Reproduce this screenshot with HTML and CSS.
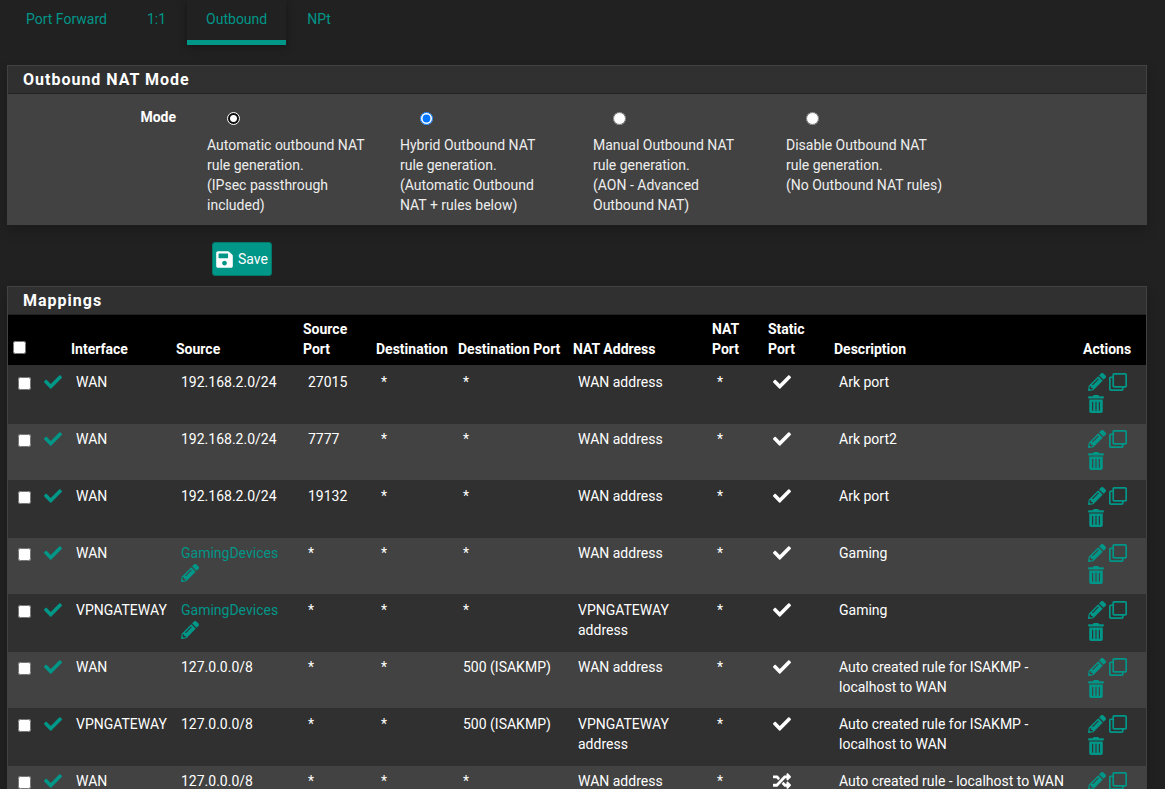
FILE: index.html
```html
<!DOCTYPE html>
<html lang="en">
<head>
<meta charset="utf-8">
<meta name="viewport" content="width=device-width, initial-scale=1">
<title>Firewall: NAT: Outbound</title>
<link rel="stylesheet" href="styles.css">
</head>
<body>
<svg class="sprite" aria-hidden="true">
  <symbol id="check" viewBox="0 0 512 512"><path d="M173.898 439.404l-166.4-166.4c-9.997-9.997-9.997-26.206 0-36.204l36.203-36.204c9.997-9.998 26.207-9.998 36.204 0L192 312.69 432.095 72.596c9.997-9.997 26.207-9.997 36.204 0l36.203 36.204c9.997 9.997 9.997 26.206 0 36.204l-294.4 294.401c-9.998 9.997-26.207 9.997-36.204-.001z"/></symbol>
  <symbol id="pencil" viewBox="0 0 512 512"><path d="M497.9 142.1l-46.1 46.1c-4.7 4.7-12.3 4.7-17 0l-111-111c-4.7-4.7-4.7-12.3 0-17l46.1-46.1c18.7-18.7 49.1-18.7 67.9 0l60.1 60.1c18.8 18.7 18.8 49.1 0 67.9zM284.2 99.8L21.6 362.4.4 483.9c-2.9 16.4 11.4 30.6 27.8 27.8l121.5-21.3 262.6-262.6c4.7-4.7 4.7-12.3 0-17l-111-111c-4.8-4.7-12.4-4.7-17.1 0zM124.1 339.9c-5.5-5.5-5.5-14.3 0-19.8l154-154c5.5-5.5 14.3-5.5 19.8 0s5.5 14.3 0 19.8l-154 154c-5.5 5.5-14.3 5.5-19.8 0zM88 424h48v36.3l-64.5 11.3-31.1-31.1L51.7 376H88v48z"/></symbol>
  <symbol id="clone" viewBox="0 0 512 512"><path d="M464 0H144c-26.51 0-48 21.49-48 48v48H48c-26.51 0-48 21.49-48 48v320c0 26.51 21.49 48 48 48h320c26.51 0 48-21.49 48-48v-48h48c26.51 0 48-21.49 48-48V48c0-26.51-21.49-48-48-48zM362 464H54a6 6 0 0 1-6-6V150a6 6 0 0 1 6-6h42v224c0 26.51 21.49 48 48 48h224v42a6 6 0 0 1-6 6zm96-96H150a6 6 0 0 1-6-6V54a6 6 0 0 1 6-6h308a6 6 0 0 1 6 6v308a6 6 0 0 1-6 6z"/></symbol>
  <symbol id="trash" viewBox="0 0 448 512"><path d="M32 464a48 48 0 0 0 48 48h288a48 48 0 0 0 48-48V128H32zm272-256a16 16 0 0 1 32 0v224a16 16 0 0 1-32 0zm-96 0a16 16 0 0 1 32 0v224a16 16 0 0 1-32 0zm-96 0a16 16 0 0 1 32 0v224a16 16 0 0 1-32 0zM432 32H312l-9.4-18.7A24 24 0 0 0 281.1 0H166.8a23.72 23.72 0 0 0-21.4 13.3L136 32H16A16 16 0 0 0 0 48v32a16 16 0 0 0 16 16h416a16 16 0 0 0 16-16V48a16 16 0 0 0-16-16z"/></symbol>
  <symbol id="save" viewBox="0 0 448 512"><path d="M433.941 129.941l-83.882-83.882A48 48 0 0 0 316.118 32H48C21.49 32 0 53.49 0 80v352c0 26.51 21.49 48 48 48h352c26.51 0 48-21.49 48-48V163.882a48 48 0 0 0-14.059-33.941zM224 416c-35.346 0-64-28.654-64-64 0-35.346 28.654-64 64-64s64 28.654 64 64c0 35.346-28.654 64-64 64zm96-304.52V212c0 6.627-5.373 12-12 12H76c-6.627 0-12-5.373-12-12V108c0-6.627 5.373-12 12-12h228.52c3.183 0 6.235 1.264 8.485 3.515l3.48 3.48A11.996 11.996 0 0 1 320 111.48z"/></symbol>
  <symbol id="shuffle" viewBox="0 0 512 512"><path d="M504.971 359.029c9.373 9.373 9.373 24.569 0 33.941l-80 79.984c-15.01 15.01-40.971 4.49-40.971-16.971V416h-58.785a12.004 12.004 0 0 1-8.773-3.812l-70.556-75.596 53.333-57.143L352 336h32v-39.981c0-21.438 25.943-31.998 40.971-16.971l80 79.981zM12 176h84l52.781 56.551 53.333-57.143-70.556-75.596A11.999 11.999 0 0 0 122.785 96H12c-6.627 0-12 5.373-12 12v56c0 6.627 5.373 12 12 12zm372 0v39.984c0 21.46 25.961 31.98 40.971 16.971l80-79.984c9.373-9.373 9.373-24.569 0-33.941l-80-79.981C409.943 24.021 384 34.582 384 56.019V96h-58.785a12.004 12.004 0 0 0-8.773 3.812L96 336H12c-6.627 0-12 5.373-12 12v56c0 6.627 5.373 12 12 12h110.785c3.326 0 6.503-1.381 8.773-3.812L352 176h32z"/></symbol>
</svg>

<nav class="tabs" aria-label="NAT">
  <a class="tab" href="#forward">Port Forward</a>
  <a class="tab" href="#one">1:1</a>
  <a class="tab active" href="#outbound" aria-current="page">Outbound</a>
  <a class="tab" href="#npt">NPt</a>
</nav>

<main>
  <form>
    <section class="panel">
      <h2 class="panel-title">Outbound NAT Mode</h2>
      <div class="modes" role="radiogroup" aria-labelledby="mode-label">
        <span class="mode-label" id="mode-label">Mode</span>
        <label class="mode"><input class="radio current" type="radio" name="mode"><span>Automatic outbound NAT rule generation.<br>(IPsec passthrough included)</span></label>
        <label class="mode"><input class="radio" type="radio" name="mode" checked><span>Hybrid Outbound NAT rule generation.<br>(Automatic Outbound NAT + rules below)</span></label>
        <label class="mode"><input class="radio" type="radio" name="mode"><span>Manual Outbound NAT rule generation.<br>(AON - Advanced Outbound NAT)</span></label>
        <label class="mode"><input class="radio" type="radio" name="mode"><span>Disable Outbound NAT rule generation.<br>(No Outbound NAT rules)</span></label>
      </div>
    </section>
    <div class="form-actions">
      <button class="save" type="button"><svg class="icon narrow"><use href="#save"/></svg>Save</button>
    </div>
  </form>

  <section class="panel">
    <h2 class="panel-title">Mappings</h2>
    <table class="rules">
      <colgroup>
        <col class="c-tick"><col class="c-state"><col class="c-interface"><col class="c-source"><col class="c-source-port"><col class="c-dest"><col class="c-dest-port"><col class="c-nat"><col class="c-nat-port"><col class="c-static"><col><col class="c-actions">
      </colgroup>
      <thead>
        <tr>
          <th><input class="tick" type="checkbox" aria-label="Select all"></th>
          <th></th>
          <th>Interface</th>
          <th>Source</th>
          <th>Source Port</th>
          <th>Destination</th>
          <th>Destination Port</th>
          <th>NAT Address</th>
          <th>NAT Port</th>
          <th>Static Port</th>
          <th>Description</th>
          <th>Actions</th>
        </tr>
      </thead>
      <tbody>
        <tr>
          <td><input class="tick" type="checkbox" aria-label="Select rule 1"></td>
          <td><a href="#toggle" aria-label="Disable"><svg class="icon"><use href="#check"/></svg></a></td>
          <td>WAN</td><td>192.168.2.0/24</td><td>27015</td><td>*</td><td>*</td><td>WAN address</td><td>*</td>
          <td><svg class="icon"><use href="#check"/></svg></td>
          <td>Ark port</td>
          <td><div class="actions"><a href="#edit" aria-label="Edit"><svg class="icon"><use href="#pencil"/></svg></a><a href="#copy" aria-label="Copy"><svg class="icon"><use href="#clone"/></svg></a><a href="#delete" aria-label="Delete"><svg class="icon narrow"><use href="#trash"/></svg></a></div></td>
        </tr>
        <tr>
          <td><input class="tick" type="checkbox" aria-label="Select rule 2"></td>
          <td><a href="#toggle" aria-label="Disable"><svg class="icon"><use href="#check"/></svg></a></td>
          <td>WAN</td><td>192.168.2.0/24</td><td>7777</td><td>*</td><td>*</td><td>WAN address</td><td>*</td>
          <td><svg class="icon"><use href="#check"/></svg></td>
          <td>Ark port2</td>
          <td><div class="actions"><a href="#edit" aria-label="Edit"><svg class="icon"><use href="#pencil"/></svg></a><a href="#copy" aria-label="Copy"><svg class="icon"><use href="#clone"/></svg></a><a href="#delete" aria-label="Delete"><svg class="icon narrow"><use href="#trash"/></svg></a></div></td>
        </tr>
        <tr>
          <td><input class="tick" type="checkbox" aria-label="Select rule 3"></td>
          <td><a href="#toggle" aria-label="Disable"><svg class="icon"><use href="#check"/></svg></a></td>
          <td>WAN</td><td>192.168.2.0/24</td><td>19132</td><td>*</td><td>*</td><td>WAN address</td><td>*</td>
          <td><svg class="icon"><use href="#check"/></svg></td>
          <td>Ark port</td>
          <td><div class="actions"><a href="#edit" aria-label="Edit"><svg class="icon"><use href="#pencil"/></svg></a><a href="#copy" aria-label="Copy"><svg class="icon"><use href="#clone"/></svg></a><a href="#delete" aria-label="Delete"><svg class="icon narrow"><use href="#trash"/></svg></a></div></td>
        </tr>
        <tr>
          <td><input class="tick" type="checkbox" aria-label="Select rule 4"></td>
          <td><a href="#toggle" aria-label="Disable"><svg class="icon"><use href="#check"/></svg></a></td>
          <td>WAN</td><td><a href="#alias">GamingDevices</a> <a href="#edit-alias" aria-label="Edit alias"><svg class="icon"><use href="#pencil"/></svg></a></td><td>*</td><td>*</td><td>*</td><td>WAN address</td><td>*</td>
          <td><svg class="icon"><use href="#check"/></svg></td>
          <td>Gaming</td>
          <td><div class="actions"><a href="#edit" aria-label="Edit"><svg class="icon"><use href="#pencil"/></svg></a><a href="#copy" aria-label="Copy"><svg class="icon"><use href="#clone"/></svg></a><a href="#delete" aria-label="Delete"><svg class="icon narrow"><use href="#trash"/></svg></a></div></td>
        </tr>
        <tr>
          <td><input class="tick" type="checkbox" aria-label="Select rule 5"></td>
          <td><a href="#toggle" aria-label="Disable"><svg class="icon"><use href="#check"/></svg></a></td>
          <td>VPNGATEWAY</td><td><a href="#alias">GamingDevices</a> <a href="#edit-alias" aria-label="Edit alias"><svg class="icon"><use href="#pencil"/></svg></a></td><td>*</td><td>*</td><td>*</td><td>VPNGATEWAY address</td><td>*</td>
          <td><svg class="icon"><use href="#check"/></svg></td>
          <td>Gaming</td>
          <td><div class="actions"><a href="#edit" aria-label="Edit"><svg class="icon"><use href="#pencil"/></svg></a><a href="#copy" aria-label="Copy"><svg class="icon"><use href="#clone"/></svg></a><a href="#delete" aria-label="Delete"><svg class="icon narrow"><use href="#trash"/></svg></a></div></td>
        </tr>
        <tr>
          <td><input class="tick" type="checkbox" aria-label="Select rule 6"></td>
          <td><a href="#toggle" aria-label="Disable"><svg class="icon"><use href="#check"/></svg></a></td>
          <td>WAN</td><td>127.0.0.0/8</td><td>*</td><td>*</td><td>500 (ISAKMP)</td><td>WAN address</td><td>*</td>
          <td><svg class="icon"><use href="#check"/></svg></td>
          <td>Auto created rule for ISAKMP - localhost to WAN</td>
          <td><div class="actions"><a href="#edit" aria-label="Edit"><svg class="icon"><use href="#pencil"/></svg></a><a href="#copy" aria-label="Copy"><svg class="icon"><use href="#clone"/></svg></a><a href="#delete" aria-label="Delete"><svg class="icon narrow"><use href="#trash"/></svg></a></div></td>
        </tr>
        <tr>
          <td><input class="tick" type="checkbox" aria-label="Select rule 7"></td>
          <td><a href="#toggle" aria-label="Disable"><svg class="icon"><use href="#check"/></svg></a></td>
          <td>VPNGATEWAY</td><td>127.0.0.0/8</td><td>*</td><td>*</td><td>500 (ISAKMP)</td><td>VPNGATEWAY address</td><td>*</td>
          <td><svg class="icon"><use href="#check"/></svg></td>
          <td>Auto created rule for ISAKMP - localhost to WAN</td>
          <td><div class="actions"><a href="#edit" aria-label="Edit"><svg class="icon"><use href="#pencil"/></svg></a><a href="#copy" aria-label="Copy"><svg class="icon"><use href="#clone"/></svg></a><a href="#delete" aria-label="Delete"><svg class="icon narrow"><use href="#trash"/></svg></a></div></td>
        </tr>
        <tr>
          <td><input class="tick" type="checkbox" aria-label="Select rule 8"></td>
          <td><a href="#toggle" aria-label="Disable"><svg class="icon"><use href="#check"/></svg></a></td>
          <td>WAN</td><td>127.0.0.0/8</td><td>*</td><td>*</td><td>*</td><td>WAN address</td><td>*</td>
          <td><svg class="icon"><use href="#shuffle"/></svg></td>
          <td>Auto created rule - localhost to WAN</td>
          <td><div class="actions"><a href="#edit" aria-label="Edit"><svg class="icon"><use href="#pencil"/></svg></a><a href="#copy" aria-label="Copy"><svg class="icon"><use href="#clone"/></svg></a><a href="#delete" aria-label="Delete"><svg class="icon narrow"><use href="#trash"/></svg></a></div></td>
        </tr>
      </tbody>
    </table>
  </section>
</main>
</body>
</html>
```

FILE: styles.css
```css
* { box-sizing: border-box; }

body {
  margin: 0;
  padding: 0 18px 0 7px;
  background: #212121;
  color: #fff;
  font: 14px/20px Roboto, sans-serif;
}

a { color: #009688; text-decoration: none; }

.sprite { display: none; }

.icon {
  display: inline-block;
  width: 18px;
  height: 18px;
  fill: currentColor;
  vertical-align: middle;
}
.icon.narrow { width: 16px; }

.tabs { display: flex; gap: 2px; margin-bottom: 20px; }
.tab {
  padding: 9px 19px 11px;
  border-bottom: 5px solid transparent;
}
.tab.active {
  border-color: #009688;
  box-shadow: 0 2px 8px rgba(0, 0, 0, .35);
}

.panel {
  border: 1px solid #424242;
  background: #424242;
  box-shadow: 0 6px 12px rgba(0, 0, 0, .2);
}
.panel-title {
  margin: 0;
  padding: 4px 15px 3px;
  background: #303030;
  border-bottom: 1px solid #212121;
  font-size: 16px;
  font-weight: 700;
  line-height: 20px;
  letter-spacing: 1px;
}

.modes {
  display: grid;
  grid-template-columns: repeat(6, 1fr);
  margin: 0 -11px 0 -9px;
  padding: 13px 0 9px;
}
.mode-label {
  padding-right: 16px;
  font-weight: 700;
  text-align: right;
}
.mode { padding: 0 19px 0 15px; color: #eee; }
.mode span { display: block; }
.radio { display: block; margin: 5px 0 10px 20px; }
.radio.current {
  appearance: none;
  width: 13px;
  height: 13px;
  border: 1px solid #fff;
  border-radius: 50%;
  background: radial-gradient(circle, #fff 0 3px, #101010 4px);
}

.form-actions { padding: 17px 205px 10px; }
.save {
  display: flex;
  align-items: center;
  gap: 5px;
  height: 34px;
  padding: 0 3px;
  border: 1px solid #00796b;
  border-radius: 3px;
  background: #009688;
  color: #fff;
  font: inherit;
}
.save .icon { width: 17px; height: 19px; }

.rules {
  width: 100%;
  table-layout: fixed;
  border-spacing: 0;
  background: #303030;
}
.c-tick { width: 26px; }
.c-state { width: 32px; }
.c-interface { width: 105px; }
.c-source { width: 127px; }
.c-source-port { width: 73px; }
.c-dest { width: 82px; }
.c-dest-port { width: 115px; }
.c-nat { width: 139px; }
.c-nat-port { width: 56px; }
.c-static { width: 66px; }
.c-actions { width: 68px; }

th {
  padding: 4px 5px 6px;
  border-bottom: 1px solid #303030;
  background: #000;
  font-weight: 700;
  text-align: left;
  vertical-align: bottom;
}
th:nth-child(6), th:nth-child(7) { white-space: nowrap; }
td {
  height: 57px;
  padding: 5px 4px 5px 10px;
  border-top: 1px solid #303030;
  vertical-align: top;
}
tbody tr:nth-child(even) td { background: #424242; }

.tick { display: block; margin: 5px 0 0; }
th .tick { margin: 0 0 5px; }
td > a > .icon, td > .icon { margin-top: -2px; }

.actions {
  display: flex;
  flex-wrap: wrap;
  gap: 4px 3px;
  padding-top: 1px;
}
.actions a, .actions .icon { display: block; }
```
